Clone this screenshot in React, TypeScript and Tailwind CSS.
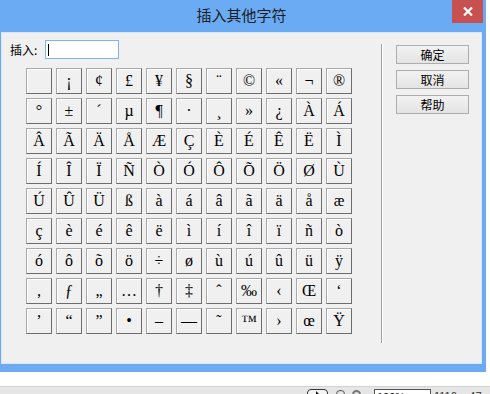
import React from 'react';

const rows: string[][] = [
    ['', '¡', '¢', '£', '¥', '§', '¨', '©', '«', '¬', '®'],
    ['°', '±', '´', 'µ', '¶', '·', '¸', '»', '¿', 'À', 'Á'],
    ['Â', 'Ã', 'Ä', 'Å', 'Æ', 'Ç', 'È', 'É', 'Ê', 'Ë', 'Ì'],
    ['Í', 'Î', 'Ï', 'Ñ', 'Ò', 'Ó', 'Ô', 'Õ', 'Ö', 'Ø', 'Ù'],
    ['Ú', 'Û', 'Ü', 'ß', 'à', 'á', 'â', 'ã', 'ä', 'å', 'æ'],
    ['ç', 'è', 'é', 'ê', 'ë', 'ì', 'í', 'î', 'ï', 'ñ', 'ò'],
    ['ó', 'ô', 'õ', 'ö', '÷', 'ø', 'ù', 'ú', 'û', 'ü', 'ÿ'],
    ['‚', 'ƒ', '„', '…', '†', '‡', 'ˆ', '‰', '‹', 'Œ', '‘'],
    ['’', '“', '”', '•', '–', '—', '˜', '™', '›', 'œ', 'Ÿ'],
];

const cjk = "font-['Noto_Sans_CJK_SC','Noto_Sans',sans-serif]";

function CharCell({ ch }: { ch: string }) {
    return (
        <div className="w-[26px] h-[26px] flex items-center justify-center bg-[#f0f0f0] border border-t-[#a8a8a8] border-l-[#a8a8a8] border-b-[#6c6c6c] border-r-[#6c6c6c] shadow-[inset_1px_1px_0_#ffffff] font-['Liberation_Serif',serif] text-[16px] leading-none text-black overflow-hidden whitespace-nowrap">
            {ch}
        </div>
    );
}

function DlgButton({ label }: { label: string }) {
    return (
        <div className={`w-[73px] h-[19px] flex items-center justify-center border border-[#adadad] bg-gradient-to-b from-[#f2f2f2] to-[#e4e4e4] text-[12px] leading-none text-black ${cjk}`}>
            {label}
        </div>
    );
}

export default function App() {
    return (
        <div className="w-[490px] h-[394px] bg-white overflow-hidden flex flex-col">
            {/* Dialog window */}
            <div className="w-[486px] h-[372px] bg-[#6aabf4] flex flex-col pl-[1px] pr-[4px]">
                {/* Title bar */}
                <div className="h-[32px] flex relative">
                    <div className={`flex-1 flex items-center justify-center text-[15px] text-[#1e1e1e] pb-[1px] ${cjk}`}>
                        插入其他字符
                    </div>
                    <div className="absolute right-[-1px] top-0 w-[31px] h-[23px] bg-[#c75050] flex items-center justify-center">
                        <svg width="10" height="9" viewBox="0 0 10 9">
                            <path d="M1 0.5 L9 8.5 M9 0.5 L1 8.5" stroke="#ffffff" strokeWidth="2.2" />
                        </svg>
                    </div>
                </div>

                {/* Client area */}
                <div className="h-[332px] bg-[#f0f0f0] border border-[#dce6f2] flex pt-[7px]">
                    <div className="pl-[8px] flex flex-col">
                        <div className="h-[19px] flex items-center">
                            <span className={`text-[12px] text-black w-[35px] ${cjk}`}>插入:</span>
                            <div className="w-[74px] h-[19px] bg-white border border-[#7eb4ea] flex items-center pl-[2px]">
                                <div className="w-[1px] h-[12px] bg-black" />
                            </div>
                        </div>
                        <div className="mt-[9px] ml-[16px] grid grid-cols-[repeat(11,26px)] gap-[4px]">
                            {rows.flat().map((ch, i) => (
                                <CharCell key={i} ch={ch} />
                            ))}
                        </div>
                    </div>

                    {/* Separator */}
                    <div className="ml-[29px] mt-[4px] w-[1px] h-[299px] bg-[#a0a0a0] shadow-[1px_0_0_#ffffff]" />

                    <div className="ml-[14px] mt-[5px] flex flex-col gap-[6px]">
                        <DlgButton label="确定" />
                        <DlgButton label="取消" />
                        <DlgButton label="帮助" />
                    </div>
                </div>
            </div>

            {/* Status bar behind the dialog */}
            <div className="h-[14px]" />
            <div className="h-[8px] border-t border-[#d2d2d2] bg-[#e6e6e6] flex items-start overflow-hidden pt-[2px]">
                <div className="ml-[307px] w-[21px] h-[12px] border border-[#333333] rounded-[4px] bg-[#f4f4f4] flex justify-center">
                    <svg width="6" height="8" viewBox="0 0 6 8"><path d="M1 1 L1 8 L5 5 Z" fill="#111111" /></svg>
                </div>
                <div className="ml-[8px] w-[9px] h-[10px] border border-[#555555] rounded-t-[4px] mt-[1px]" />
                <div className="ml-[7px] w-[9px] h-[9px] border-2 border-[#777777] rounded-full mt-[1px]" />
                <div className="ml-[13px] w-[57px] h-[14px] bg-white border border-[#555555] text-[11px] leading-[14px] pl-[2px] font-['Liberation_Sans',sans-serif] text-black">
                    100%
                </div>
                <div className="ml-[3px] text-[11px] leading-[14px] font-['Liberation_Sans',sans-serif] text-[#333333] whitespace-nowrap">
                    1116 × 47
                </div>
            </div>
        </div>
    );
}
